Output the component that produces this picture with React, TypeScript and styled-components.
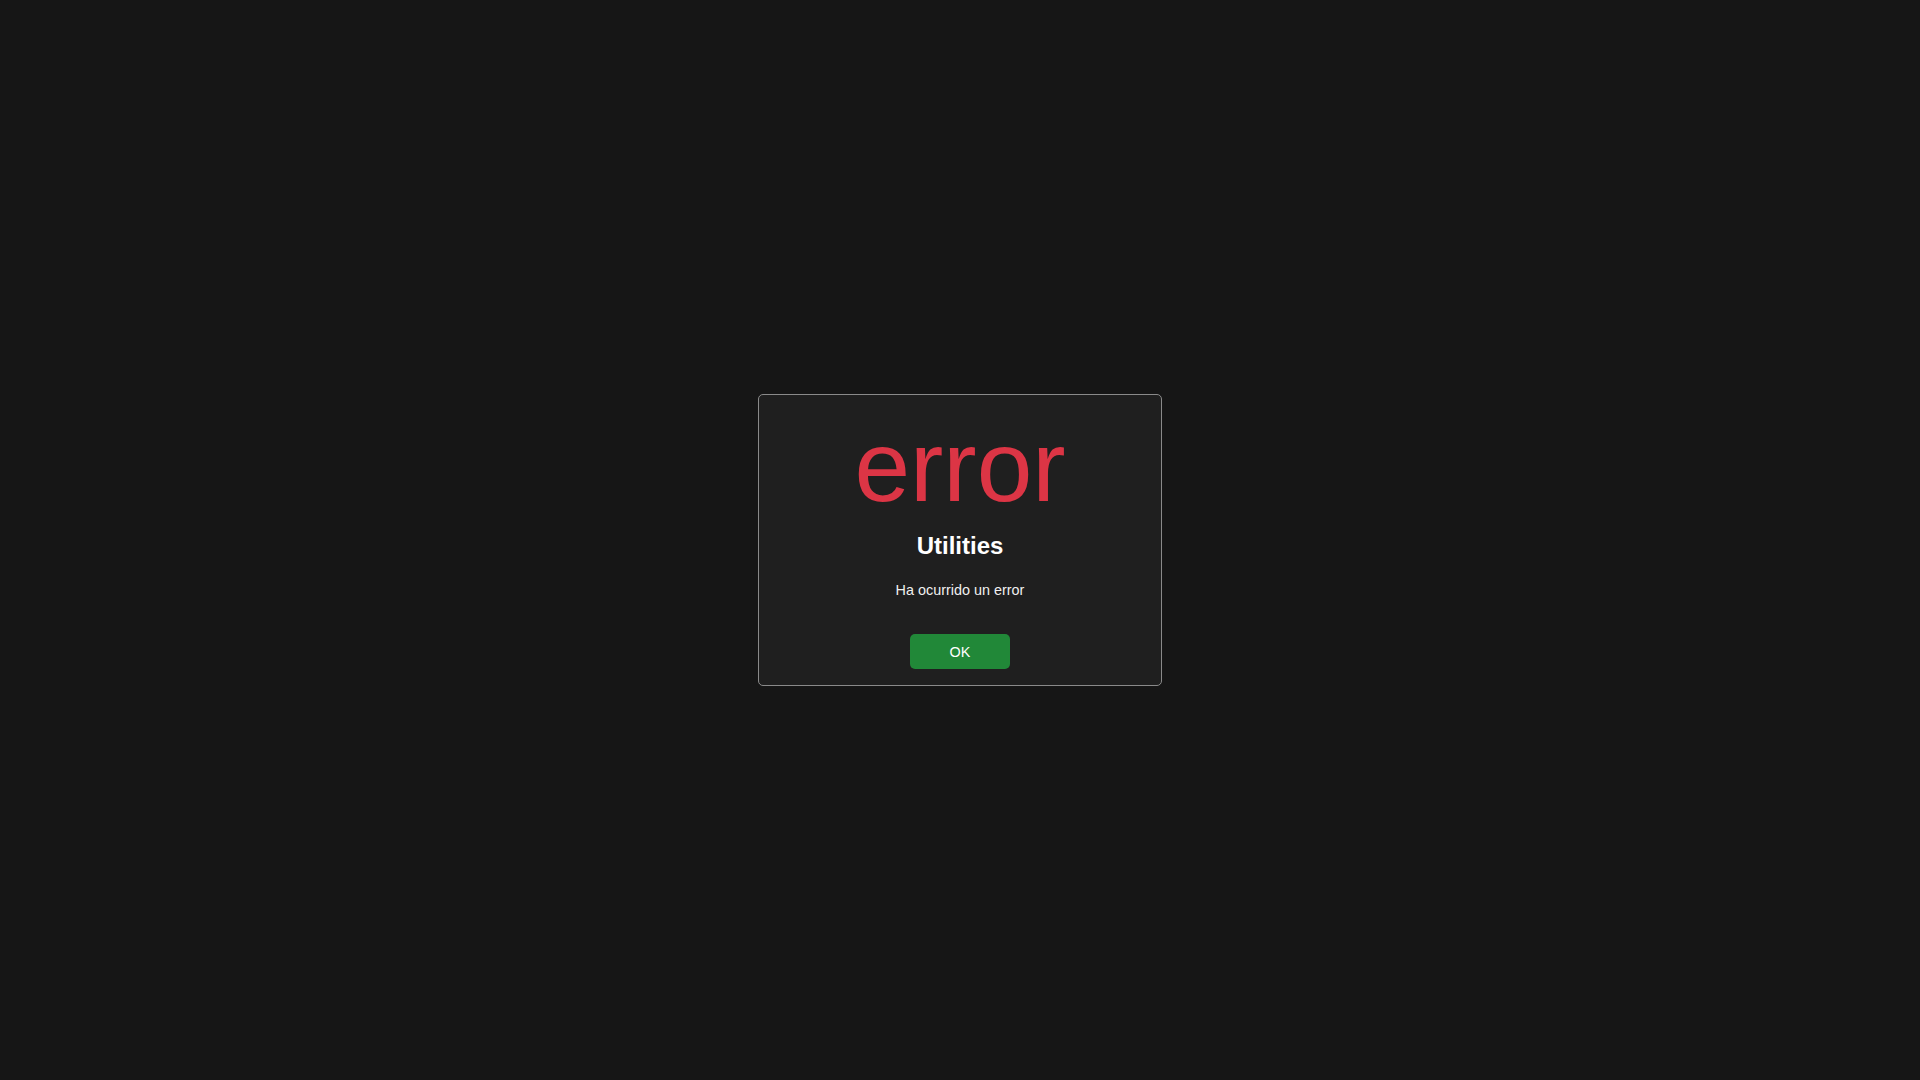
import styled, { createGlobalStyle } from "styled-components";

const GlobalStyle = createGlobalStyle`
  html, body {
    margin: 0;
    padding: 0;
    height: 100%;
    background: #161616;
    font-family: "Liberation Sans", Arial, sans-serif;
  }
  #root {
    height: 100%;
  }
`;

const Page = styled.div`
  min-height: 100vh;
  display: flex;
  align-items: center;
  justify-content: center;
`;

const Dialog = styled.div`
  box-sizing: border-box;
  width: 404px;
  padding: 14px 20px 16px;
  background: #1f1f1f;
  border: 1px solid #8a8a8a;
  border-radius: 5px;
  display: flex;
  flex-direction: column;
  align-items: center;
  text-align: center;
`;

// icon font name shown as plain text (no icon font available)
const Icon = styled.div`
  font-size: 100px;
  line-height: 115px;
  color: #dc3545;
`;

const Title = styled.h2`
  margin: 8px 0 0;
  font-size: 24px;
  font-weight: bold;
  color: #ffffff;
`;

const Message = styled.p`
  margin: 22px 0 0;
  font-size: 14.4px;
  color: #f0f0f0;
`;

const OkButton = styled.button`
  margin-top: 36px;
  width: 100px;
  height: 35px;
  border: none;
  border-radius: 5px;
  background: #218838;
  color: #ffffff;
  font-family: inherit;
  font-size: 14.4px;
  cursor: pointer;
  &:hover {
    background: #1e7e34;
  }
`;

const App: React.FC = () => {
  return (
    <>
      <GlobalStyle />
      <Page>
        <Dialog>
          <Icon>error</Icon>
          <Title>Utilities</Title>
          <Message>Ha ocurrido un error</Message>
          <OkButton>OK</OkButton>
        </Dialog>
      </Page>
    </>
  );
};

export default App;
